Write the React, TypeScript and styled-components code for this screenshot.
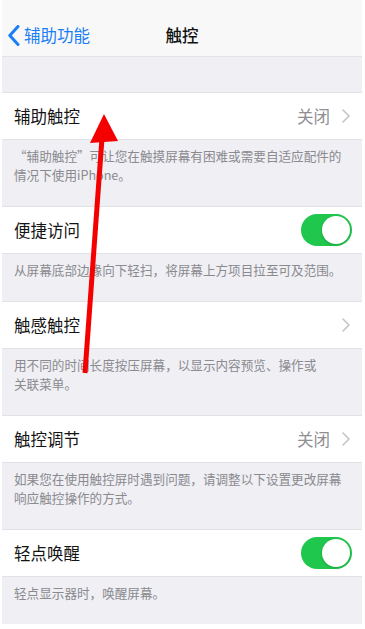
import React from "react";
import styled, { createGlobalStyle } from "styled-components";

const Global = createGlobalStyle`
  html, body { margin: 0; padding: 0; background: #ffffff; }
  body { font-family: "Noto Sans CJK SC", "Noto Sans", sans-serif; -webkit-font-smoothing: antialiased; }
`;

const Screen = styled.div`
  position: relative;
  width: 360px;
  margin: 0 3px 0 2px;
  background: #efeff4;
`;

const NavBar = styled.div`
  height: 57px;
  box-sizing: border-box;
  background: #f8f8f9;
  border-bottom: 1px solid #e4e4e7;
  display: grid;
  grid-template-columns: 1fr auto 1fr;
  align-items: center;
  padding-top: 14px;
`;

const Back = styled.div`
  display: flex;
  align-items: center;
  gap: 4px;
  padding-left: 6px;
  color: #1a7ef5;
  font-size: 16.5px;
`;

const Title = styled.div`
  font-size: 16.5px;
  color: #111;
  font-weight: 500;
`;

const Gap = styled.div`
  height: 35px;
`;

const Row = styled.div`
  height: 48px;
  box-sizing: border-box;
  background: #fff;
  border-top: 1px solid #e2e2e6;
  border-bottom: 1px solid #e2e2e6;
  display: flex;
  align-items: center;
  padding: 0 12px;
`;

const Label = styled.div`
  flex: 1;
  font-size: 16.5px;
  color: #141414;
`;

const Value = styled.div`
  font-size: 16.5px;
  color: #8e8e93;
  margin-right: 12px;
`;

const Footer = styled.div`
  padding: 6px 14px 22px 12px;
  font-size: 12.6px;
  line-height: 19px;
  color: #8a8a8f;
`;

const Toggle = styled.div<{ $on: boolean }>`
  width: 51px;
  height: 32px;
  border-radius: 16px;
  box-sizing: border-box;
  background: ${(p) => (p.$on ? "#1fc84d" : "#e5e5ea")};
  display: flex;
  align-items: center;
  justify-content: ${(p) => (p.$on ? "flex-end" : "flex-start")};
  padding: 2px;
  margin-right: -2px;
`;

const Knob = styled.div`
  width: 28px;
  height: 28px;
  border-radius: 50%;
  background: #fff;
  box-shadow: 0 1px 3px rgba(0, 0, 0, 0.2);
`;

const ArrowLayer = styled.svg`
  position: absolute;
  left: 0;
  top: 0;
  pointer-events: none;
`;

const Chevron = () => (
  <svg width="8" height="14" viewBox="0 0 8 14">
    <path d="M1 1 L7 7 L1 13" fill="none" stroke="#c4c4c9" strokeWidth="1.6" strokeLinecap="round" strokeLinejoin="round" />
  </svg>
);

const BackChevron = () => (
  <svg width="12" height="21" viewBox="0 0 12 21">
    <path d="M10 1.5 L1.8 10.5 L10 19.5" fill="none" stroke="#1a7ef5" strokeWidth="3" strokeLinecap="round" strokeLinejoin="round" />
  </svg>
);

type Item = { label: string; value?: string; chevron?: boolean; toggle?: boolean; footer: string[] };

const items: Item[] = [
  {
    label: "辅助触控",
    value: "关闭",
    chevron: true,
    footer: ["“辅助触控”可让您在触摸屏幕有困难或需要自适应配件的", "情况下使用iPhone。"],
  },
  { label: "便捷访问", toggle: true, footer: ["从屏幕底部边缘向下轻扫，将屏幕上方项目拉至可及范围。"] },
  {
    label: "触感触控",
    chevron: true,
    footer: ["用不同的时间长度按压屏幕，以显示内容预览、操作或", "关联菜单。"],
  },
  {
    label: "触控调节",
    value: "关闭",
    chevron: true,
    footer: ["如果您在使用触控屏时遇到问题，请调整以下设置更改屏幕", "响应触控操作的方式。"],
  },
  { label: "轻点唤醒", toggle: true, footer: ["轻点显示器时，唤醒屏幕。"] },
];

export default function App() {
  return (
    <>
      <Global />
      <Screen>
        <NavBar>
          <Back>
            <BackChevron />
            <span>辅助功能</span>
          </Back>
          <Title>触控</Title>
          <div />
        </NavBar>
        <Gap />
        {items.map((it) => (
          <React.Fragment key={it.label}>
            <Row>
              <Label>{it.label}</Label>
              {it.value && <Value>{it.value}</Value>}
              {it.chevron && <Chevron />}
              {it.toggle && (
                <Toggle $on>
                  <Knob />
                </Toggle>
              )}
            </Row>
            <Footer>
              {it.footer.map((l) => (
                <div key={l}>{l}</div>
              ))}
            </Footer>
          </React.Fragment>
        ))}
        <ArrowLayer width="360" height="629" viewBox="0 0 360 629">
          <line x1="83" y1="373" x2="100" y2="138" stroke="#f40000" strokeWidth="5" />
          <polygon points="102,114 88,143 116,141" fill="#f40000" />
        </ArrowLayer>
      </Screen>
    </>
  );
}
